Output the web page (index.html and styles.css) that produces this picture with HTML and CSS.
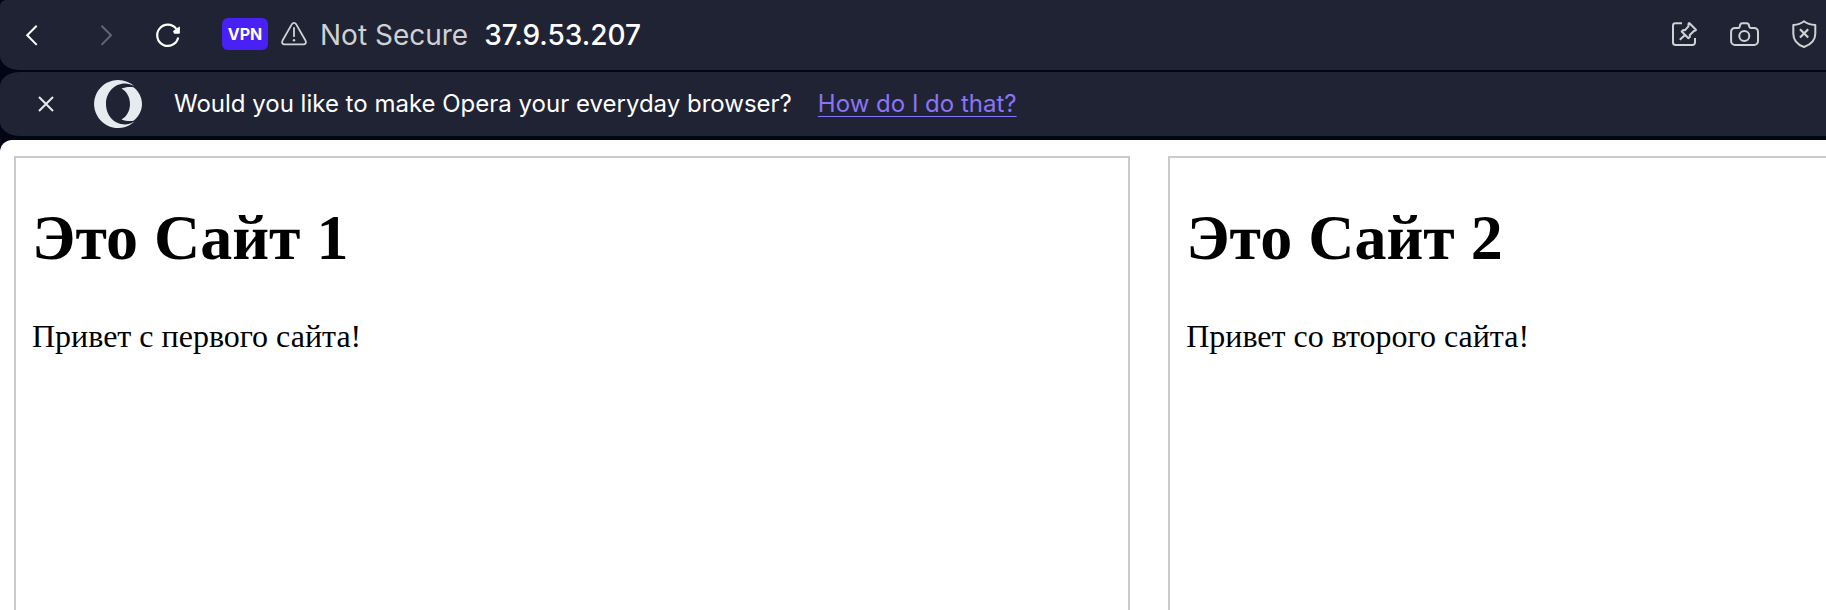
FILE: index.html
```html
<!DOCTYPE html>
<html lang="en">
<head>
<meta charset="utf-8">
<title>37.9.53.207</title>
<link rel="stylesheet" href="styles.css">
</head>
<body>
<header class="toolbar">
  <nav class="nav" aria-label="History">
    <button class="nav-button" type="button" aria-label="Back">
      <svg viewBox="0 0 48 48" fill="none" stroke="currentColor" stroke-width="2"><path d="M28.7 14.7 19.2 24.2l9.5 9.7"/></svg>
    </button>
    <button class="nav-button nav-button-off" type="button" aria-label="Forward" disabled>
      <svg viewBox="0 0 48 48" fill="none" stroke="currentColor" stroke-width="2"><path d="M25.5 14.7 35 24.2l-9.5 9.7"/></svg>
    </button>
    <button class="nav-button" type="button" aria-label="Reload">
      <svg viewBox="0 0 48 48" fill="none" stroke="currentColor" stroke-width="2.2"><path d="M34.2 26.500A10.600 10.600 0 1 1 32.200 17.800"/><path fill="currentColor" stroke="none" d="M35.900 15.500v6.200a1 1 0 0 1-1 1h-4.300a1 1 0 0 1-.9-1l-.7-1.400 3.500-3z"/></svg>
    </button>
  </nav>
  <div class="address">
    <button class="vpn" type="button">VPN</button>
    <svg class="icon warning" viewBox="0 0 32 32" fill="none" stroke="currentColor" stroke-width="1.8" stroke-linecap="round" stroke-linejoin="round"><path d="M13.9 5.1 4.400 21.800c-.9 1.700.1 3.500 2 3.500h19.200c1.900 0 2.900-1.800 2-3.500L18.100 5.100c-1-1.700-3.200-1.700-4.200 0zM16 9v8.200"/><circle cx="16" cy="21.300" r="1.200" fill="currentColor" stroke="none"/></svg>
    <span class="security">Not Secure</span>
    <span class="host">37.9.53.207</span>
  </div>
  <div class="tools">
    <button class="tool" type="button" aria-label="Pin">
      <svg class="icon" viewBox="0 0 32 32" fill="none" stroke="currentColor" stroke-width="2" stroke-linejoin="round"><path d="M14 4.200H7.400a2.400 2.400 0 0 0-2.400 2.400v17a2.400 2.400 0 0 0 2.400 2.400h17.200a2.400 2.400 0 0 0 2.400-2.400V19"/><path d="m21.500 4.300 6.200 6.200c.5.5.2.9-.3 1.100l-1.500.4-4.100 4 .1 1.700-1.500 1.500-6.700-6.700 1.600-1.500 1.800.2 3.300-3.800.1-2.300c0-.8.5-1.300 1-.8zM17 15.900l-5.200 4.800"/></svg>
    </button>
    <button class="tool" type="button" aria-label="Snapshot">
      <svg class="icon" viewBox="0 0 32 32" fill="none" stroke="currentColor" stroke-width="2" stroke-linejoin="round"><path d="M10.200 8.900c1 0 1.500-.6 1.600-1.600.2-1.900.9-3.100 2.500-3.100h4.400c1.600 0 2.300 1.200 2.500 3.100.1 1 .6 1.600 1.600 1.600h3.300a3.900 3.900 0 0 1 3.900 3.900v9.300a3.900 3.900 0 0 1-3.900 3.900H7a3.900 3.900 0 0 1-3.900-3.900v-9.300A3.900 3.900 0 0 1 7 8.900z"/><circle cx="16.300" cy="17" r="5"/></svg>
    </button>
    <button class="tool" type="button" aria-label="Blocker">
      <svg class="icon" viewBox="0 0 32 32" fill="none" stroke="currentColor" stroke-width="2" stroke-linejoin="round"><path d="M16 2.300c-3 2.400-6.500 3.500-10.700 3.800v8.600c0 7 3.700 10.700 10.700 13.300 7-2.600 11.300-6.300 11.300-13.300V6.100C22.800 5.800 19 4.700 16 2.300z"/><path stroke-width="2.200" d="m12 10.300 8.200 8.200m0-8.200L12 18.500"/></svg>
    </button>
  </div>
</header>
<aside class="banner">
  <button class="close" type="button" aria-label="Close">
    <svg viewBox="0 0 32 32" fill="none" stroke="currentColor" stroke-width="2"><path d="m9 9 14 14M23 9 9 23"/></svg>
  </button>
  <svg class="logo" viewBox="0 0 48 48" fill="currentColor"><path d="M24 0a24 24 0 1 0 16.500 41.500C37 43.600 34.200 44.400 31 44.400 20 44.400 12 35.300 12 24S20 3.600 31 3.600c3.200 0 6 .8 9.500 2.900A24 24 0 0 0 24 0z"/><path d="M27.500 8.500c3.500-1.500 8-2 12-1.300C44.500 11.300 48 17 48 24s-3.500 12.700-8.500 16.800c-4 .7-8 .2-12-1.300 5-2.700 8.500-8.500 8.500-15.500S32.500 11.200 27.500 8.500z"/></svg>
  <p class="question">Would you like to make Opera your everyday browser?</p>
  <a class="help" href="#">How do I do that?</a>
</aside>
<main class="page">
  <section class="frame">
    <h1 lang="ru">Это Сайт 1</h1>
    <p lang="ru">Привет с первого сайта!</p>
  </section>
  <section class="frame">
    <h1 lang="ru">Это Сайт 2</h1>
    <p lang="ru">Привет со второго сайта!</p>
  </section>
</main>
</body>
</html>
```

FILE: styles.css
```css
* {
  box-sizing: border-box;
}

body {
  display: flex;
  flex-direction: column;
  height: 100vh;
  margin: 0;
  overflow: hidden;
  background: #020514;
  color: #fff;
  font-family: Inter, "Liberation Sans", sans-serif;
}

button {
  padding: 0;
  border: 0;
  background: none;
  color: inherit;
  font: inherit;
}

svg {
  display: block;
}

.toolbar,
.banner {
  display: flex;
  flex: none;
  align-items: center;
  background: #202334;
}

.toolbar {
  height: 70px;
  padding: 0 6px 0 8px;
  margin-bottom: 2px;
  border-radius: 6px 0 0 20px / 6px 0 0 14px;
}

.nav {
  display: flex;
  gap: 20px;
}

.nav-button,
.nav-button svg {
  width: 48px;
  height: 48px;
}

.nav-button-off {
  color: #646672;
}

.address {
  display: flex;
  align-items: center;
  margin-left: 30px;
  font-size: 28px;
  line-height: 34px;
}

.vpn {
  width: 46px;
  height: 32px;
  margin-bottom: 2px;
  border-radius: 6px;
  background: #4a21f5;
  font-size: 16px;
  font-weight: 700;
  line-height: 32px;
}

.icon {
  width: 32px;
  height: 32px;
}

.warning {
  margin-left: 10px;
  color: #cfd1d2;
}

.security {
  margin-left: 10px;
  color: #cfd1d2;
}

.host {
  margin-left: 16px;
  font-weight: 500;
}

.tools {
  display: flex;
  gap: 28px;
  margin-left: auto;
  color: #cfd1d2;
}

.banner {
  height: 64px;
  padding-left: 30px;
  margin-bottom: 4px;
  border-radius: 20px 0 0 20px / 14px 0 0 14px;
  font-size: 24px;
  line-height: 32px;
}

.close,
.close svg {
  width: 32px;
  height: 32px;
}

.close,
.logo {
  color: #e7ebef;
}

.logo {
  width: 48px;
  height: 48px;
  margin-left: 32px;
}

.question {
  margin: 0 0 0 32px;
}

.help {
  margin-left: 26px;
  color: #8b74f7;
  text-decoration-thickness: 1px;
  text-underline-offset: 4px;
}

.page {
  display: grid;
  flex: 1;
  grid-template-columns: 61.6% 61.6%;
  gap: 38px;
  min-height: 0;
  padding: 16px 0 0 14px;
  overflow: hidden;
  border-top-left-radius: 12px;
  background: #fff;
  color: #000;
  font-family: "Liberation Serif", serif;
}

.frame {
  padding: 43px 16px;
  border: 2px solid #cacaca;
  border-bottom: 0;
}

.frame h1 {
  margin: 0 0 43px;
  font-size: 64px;
  line-height: 74px;
}

.frame p {
  margin: 0;
  font-size: 32px;
  line-height: 36px;
}
```
